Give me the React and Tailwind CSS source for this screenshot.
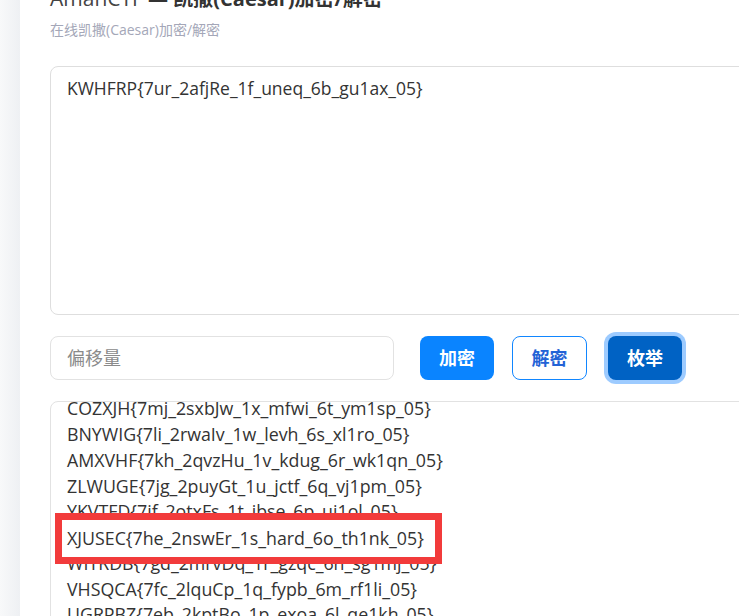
import React from "react";

const INPUT = "KWHFRP{7ur_2afjRe_1f_uneq_6b_gu1ax_05}";

function shiftBack(str, k) {
  return str.replace(/[A-Za-z]/g, (c) => {
    const base = c <= "Z" ? 65 : 97;
    return String.fromCharCode(((c.charCodeAt(0) - base - k + 26 * 2) % 26) + base);
  });
}

const rows = Array.from({ length: 25 }, (_, i) => shiftBack(INPUT, i + 1));

const font = { fontFamily: '"Open Sans", "Noto Sans CJK SC", sans-serif' };

export default function App() {
  return (
    <div className="relative flex w-[739px] h-[616px] overflow-hidden bg-white text-[#333]" style={font}>
      <div className="w-[20px] shrink-0 bg-gradient-to-r from-[#f8f9fa] to-[#eef0f3]" />
      <div className="flex-1 pl-[30px] min-w-0 overflow-hidden">
        <div className="w-[900px]">
          <h1 className="mt-[-16px] h-[28px] text-[20px] leading-[28px] text-[#333] whitespace-nowrap">
            <span className="font-normal text-[#444] text-[21px]">AmanCTF</span>
            <span className="font-bold"> — 凯撒(Caesar)加密/解密</span>
          </h1>
          <p className="mt-[8px] h-[20px] text-[14px] leading-[20px] text-[#a4a7b8]">在线凯撒(Caesar)加密/解密</p>
          <div className="mt-[26px] h-[249px] rounded-lg border border-[#dedede] px-4 pt-[9px] text-[17.5px] leading-6 text-[#333]">
            {INPUT}
          </div>
          <div className="mt-[21px] flex items-center h-[44px]">
            <div className="w-[344px] h-[44px] rounded-lg border border-[#e2e2e2] px-4 flex items-center text-[18px] text-[#8a8a8a]">
              偏移量
            </div>
            <button className="ml-[26px] w-[74px] h-[44px] rounded-lg bg-[#0a84ff] text-white font-bold text-[18px]">
              加密
            </button>
            <button className="ml-[18px] w-[75px] h-[44px] rounded-lg border border-[#1186ff] bg-white text-[#2363d6] font-bold text-[18px]">
              解密
            </button>
            <button className="ml-[21px] w-[74px] h-[44px] rounded-lg bg-[#0062c4] text-white font-bold text-[18px] ring-4 ring-[#9dcbff]">
              枚举
            </button>
          </div>
          <div className="mt-[21px] h-[300px] rounded-lg border border-[#e2e2e2] overflow-hidden px-4">
            <div className="mt-[-186px] text-[17.8px] leading-[25.75px] text-[#333]">
              {rows.map((r) => (
                <div key={r} className="whitespace-nowrap">{r}</div>
              ))}
            </div>
          </div>
        </div>
      </div>
      <div className="absolute left-[55px] top-[513px] w-[387px] h-[51px] border-[7px] border-[#f23b3b] bg-white flex items-center pl-[5px] text-[17.8px] text-[#333] whitespace-nowrap">
        XJUSEC{"{"}7he_2nswEr_1s_hard_6o_th1nk_05{"}"}
      </div>
    </div>
  );
}
